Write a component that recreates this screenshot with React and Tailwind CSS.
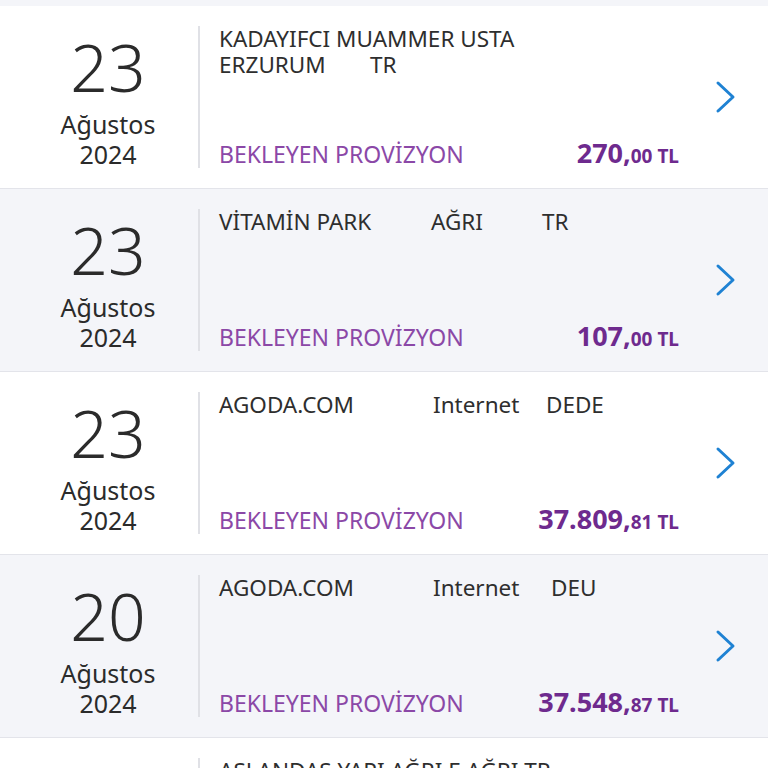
const transactions = [
  {
    day: '23',
    month: 'Ağustos',
    year: '2024',
    lines: [
      [{ text: 'KADAYIFCI MUAMMER USTA', w: '' }],
      [
        { text: 'ERZURUM', w: 'w-[151px]' },
        { text: 'TR', w: '' },
      ],
    ],
    whole: '270,',
    cents: '00 TL',
    tone: 'bg-white',
  },
  {
    day: '23',
    month: 'Ağustos',
    year: '2024',
    lines: [
      [
        { text: 'VİTAMİN PARK', w: 'w-[212px]' },
        { text: 'AĞRI', w: 'w-[111px]' },
        { text: 'TR', w: '' },
      ],
    ],
    whole: '107,',
    cents: '00 TL',
    tone: 'bg-[#f4f5f9]',
  },
  {
    day: '23',
    month: 'Ağustos',
    year: '2024',
    lines: [
      [
        { text: 'AGODA.COM', w: 'w-[214px]' },
        { text: 'Internet', w: 'w-[113px]' },
        { text: 'DEDE', w: '' },
      ],
    ],
    whole: '37.809,',
    cents: '81 TL',
    tone: 'bg-white',
  },
  {
    day: '20',
    month: 'Ağustos',
    year: '2024',
    lines: [
      [
        { text: 'AGODA.COM', w: 'w-[214px]' },
        { text: 'Internet', w: 'w-[118px]' },
        { text: 'DEU', w: '' },
      ],
    ],
    whole: '37.548,',
    cents: '87 TL',
    tone: 'bg-[#f4f5f9]',
  },
  {
    day: '19',
    month: 'Ağustos',
    year: '2024',
    lines: [[{ text: 'ASLANDAS YAPI AĞRI E AĞRI TR', w: '' }]],
    whole: '1.250,',
    cents: '00 TL',
    tone: 'bg-white',
  },
];

const Chevron = () => (
  <svg width="22" height="34" viewBox="0 0 22 34" fill="none" className="text-[#1f82d3]">
    <polyline points="3,3 18,17 3,31" stroke="currentColor" strokeWidth="3" strokeLinecap="round" strokeLinejoin="round" />
  </svg>
);

const Row = ({ item }) => (
  <div className={`flex h-[183px] shrink-0 items-stretch border-b border-[#e3e4ea] py-[20px] ${item.tone}`}>
    <div className="flex w-[198px] shrink-0 flex-col items-center pl-[18px] text-[#2b2b2b]">
      <span className="mt-[7px] text-[66px] font-light leading-[66px]">{item.day}</span>
      <span className="mt-[10px] text-[25px] leading-[30px]">{item.month}</span>
      <span className="text-[25px] leading-[30px]">{item.year}</span>
    </div>
    <div className="w-[2px] shrink-0 bg-[#e0e1e6]" />
    <div className="-mb-[5px] flex w-[479px] shrink-0 flex-col justify-between pl-[19px]">
      <div className="text-[22.5px] leading-[26px] text-[#2e2e2e]">
        {item.lines.map((line, i) => (
          <div key={i} className="flex whitespace-nowrap">
            {line.map((seg) => (
              <span key={seg.text} className={`shrink-0 ${seg.w}`}>{seg.text}</span>
            ))}
          </div>
        ))}
      </div>
      <div className="flex items-baseline justify-between whitespace-nowrap">
        <span className="text-[23px] leading-[28px] text-[#8b48a7]">BEKLEYEN PROVİZYON</span>
        <span className="font-bold text-[#6e2a8e]">
          <span className="text-[27px]">{item.whole}</span>
          <span className="text-[19px]">{item.cents}</span>
        </span>
      </div>
    </div>
    <div className="flex flex-1 items-center justify-end pr-[31px]">
      <Chevron />
    </div>
  </div>
);

export default function App() {
  return (
    <div className="flex h-[768px] w-[768px] flex-col overflow-hidden bg-[#f4f5f9] font-['Noto_Sans',sans-serif]">
      <div className="h-[6px] shrink-0 bg-[#f4f5f9]" />
      {transactions.map((item, i) => (
        <Row key={i} item={item} />
      ))}
    </div>
  );
}
